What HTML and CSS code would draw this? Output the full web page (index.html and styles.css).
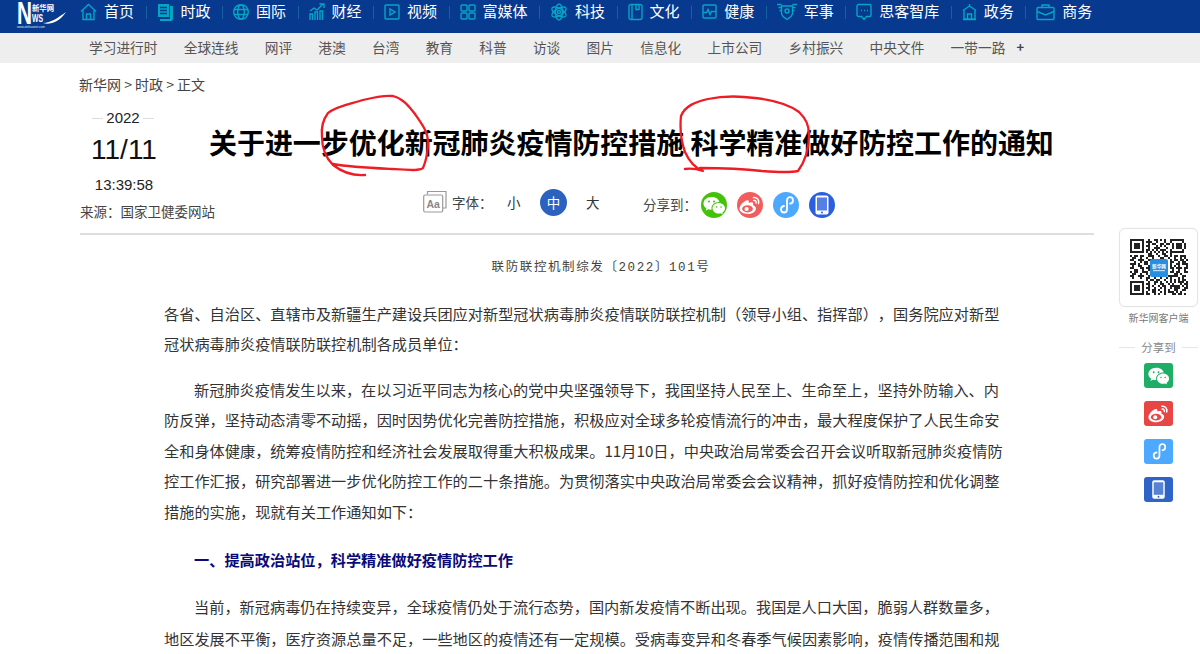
FILE: index.html
```html
<!DOCTYPE html>
<html lang="zh-CN">
<head>
<meta charset="utf-8">
<title>关于进一步优化新冠肺炎疫情防控措施 科学精准做好防控工作的通知</title>
<link rel="stylesheet" href="styles.css">
</head>
<body>
<svg class="sprite" aria-hidden="true">
  <symbol id="wechat" viewBox="0 0 26 26">
    <path fill="#fff" d="M10.500 5C6 5 2.500 7.900 2.500 11.500c0 2 1.100 3.700 2.900 4.900l-.7 2.300 2.600-1.400c.9.300 1.800.4 2.700.4h.7a5 5 0 0 1-.2-1.500c0-3.500 3.300-6.300 7.400-6.300h.5C17.700 7 14.400 5 10.500 5z"/>
    <path fill="#fff" d="M24 16.300c0-3-3-5.300-6.200-5.300-3.500 0-6.300 2.400-6.300 5.300s2.800 5.300 6.300 5.300c.7 0 1.400-.1 2.100-.3l2 1.100-.5-1.800c1.500-1.100 2.600-2.500 2.600-4.300z"/>
    <g fill="currentColor"><circle cx="8" cy="9.600" r="1"/><circle cx="13" cy="9.600" r="1"/><circle cx="15.600" cy="15" r=".8"/><circle cx="20" cy="15" r=".8"/></g>
  </symbol>
  <symbol id="weibo" viewBox="0 0 26 26">
    <path fill="#fff" d="M11 22c-4.500 0-8.500-2-8.500-5.200 0-2.800 3.800-7.400 7.500-8.500 1.600-.4 2.300.7 1.700 2.700 2.300-1 4.500-1 4.500 1 0 .5-.1.900-.3 1.300 1.700.5 3 1.500 3 3.200C18.900 19.500 15.500 22 11 22z"/>
    <ellipse cx="10.500" cy="16.800" rx="5.400" ry="3.600" fill="currentColor"/>
    <circle cx="9.600" cy="17" r="2.100" fill="#fff"/>
    <path fill="none" stroke="#fff" stroke-width="1.500" stroke-linecap="round" d="M16.500 5.500c3.500-.5 6 2.500 5 6M16.800 8.400c1.700-.2 2.700 1 2.300 2.600"/>
  </symbol>
  <symbol id="link" viewBox="0 0 26 26">
    <path fill="none" stroke="#fff" stroke-width="1.800" stroke-linecap="round" d="M11 14c-2 .2-3 1.600-3 3.200 0 2 1.500 3.300 3 3.300 1.800 0 3-1.300 3-3.300V8.500c0-2 1.300-3.300 3-3.300s3 1.300 3 3.300c0 1.700-1 3-3 3.200"/>
  </symbol>
  <symbol id="phone" viewBox="0 0 26 26">
    <rect x="6.500" y="3.500" width="13" height="19" rx="2" fill="#fff"/>
    <rect x="8" y="5.500" width="10" height="13" fill="currentColor" opacity=".8"/>
    <circle cx="13" cy="20.500" r="1" fill="currentColor"/>
  </symbol>
</svg>

<header class="topbar">
  <a class="logo" href="#">
    <svg width="50" height="31" viewBox="0 0 50 31">
      <text x="1" y="24" class="logo-n" textLength="15" lengthAdjust="spacingAndGlyphs">N</text>
      <text x="16" y="11" class="logo-cn" textLength="22" lengthAdjust="spacingAndGlyphs">新华网</text>
      <text x="16" y="22" class="logo-ws" textLength="11" lengthAdjust="spacingAndGlyphs">WS</text>
      <text x="1" y="28" class="logo-url" textLength="28" lengthAdjust="spacingAndGlyphs">www.xinhuanet.com</text>
      <path fill="#fff" d="M27 23C35 23 43 17 50 12C46 18 38 26 27 23z"/>
    </svg>
  </a>
  <nav class="mainnav">
    <a class="nav-item" href="#"><svg class="ico" width="17" height="18" viewBox="0 0 17 18"><path d="M1 8.500 8.500 1.500 16 8.500M3 7.500V16.500H14V7.500M6.500 16.500V11h4v5.500"/></svg>首页</a>
    <i class="nav-sep"></i>
    <a class="nav-item" href="#"><svg class="ico" width="17" height="18" viewBox="0 0 17 18"><path class="solid" d="M1 1h11v13H1zM13 3h3v13a2 2 0 0 1-2 2H3v-2h10z"/><path class="cut" d="M3 4.500h7M3 7.500h7M3 10.500h7"/></svg>时政</a>
    <i class="nav-sep"></i>
    <a class="nav-item" href="#"><svg class="ico" width="16" height="18" viewBox="0 0 16 18"><circle cx="8" cy="9" r="7.300"/><ellipse cx="8" cy="9" rx="3.300" ry="7.300"/><path d="M1 6.500h14M1 11.500h14"/></svg>国际</a>
    <i class="nav-sep"></i>
    <a class="nav-item" href="#"><svg class="ico" width="16" height="18" viewBox="0 0 16 18"><path d="M1 17v-6h2.500v6M6 17V9h2.500v8M11 17V8h2.500v9M1 8l4-3 3 2 6-6M10.500 1H15v4"/></svg>财经</a>
    <i class="nav-sep"></i>
    <a class="nav-item" href="#"><svg class="ico" width="16" height="18" viewBox="0 0 16 18"><rect x="1" y="2" width="14" height="14" rx="1"/><path d="M6 6v6l5-3z"/></svg>视频</a>
    <i class="nav-sep"></i>
    <a class="nav-item" href="#"><svg class="ico" width="16" height="18" viewBox="0 0 16 18"><rect x="1" y="2" width="6" height="6" rx="1"/><rect x="9" y="2" width="6" height="6" rx="1"/><rect x="1" y="10" width="6" height="6" rx="1"/><rect x="9" y="10" width="6" height="6" rx="1"/></svg>富媒体</a>
    <i class="nav-sep"></i>
    <a class="nav-item" href="#"><svg class="ico" width="18" height="18" viewBox="0 0 18 18"><ellipse cx="9" cy="9" rx="8" ry="3.500" transform="rotate(30 9 9)"/><ellipse cx="9" cy="9" rx="8" ry="3.500" transform="rotate(-30 9 9)"/><ellipse cx="9" cy="9" rx="3.500" ry="8"/><circle cx="9" cy="9" r="1.500"/></svg>科技</a>
    <i class="nav-sep"></i>
    <a class="nav-item" href="#"><svg class="ico" width="15" height="18" viewBox="0 0 15 18"><rect x="1" y="1.500" width="13" height="15" rx="2"/><path d="M4 1.500V16.500M8 1.500v5h3v-5"/></svg>文化</a>
    <i class="nav-sep"></i>
    <a class="nav-item" href="#"><svg class="ico" width="15" height="18" viewBox="0 0 15 18"><rect x="1" y="2" width="13" height="13" rx="1"/><path d="M1 9.500h3.500l1.500-3 2 5 1.500-3H14"/></svg>健康</a>
    <i class="nav-sep"></i>
    <a class="nav-item" href="#"><svg class="ico" width="20" height="18" viewBox="0 0 20 18"><path d="M4.500 3h11v7c0 3-3 5-5.500 6.500C7.500 15 4.500 13 4.500 10zM0 1.500h4.500M1.500 4.500h3M2.500 7.500h2M15.500 1.500H20M15.500 4.500h3M15.500 7.500h2"/><circle cx="10" cy="8" r="2"/></svg>军事</a>
    <i class="nav-sep"></i>
    <a class="nav-item" href="#"><svg class="ico" width="16" height="18" viewBox="0 0 16 18"><path d="M2.500 1.500h11a1.500 1.500 0 0 1 1.500 1.500v9a1.500 1.500 0 0 1-1.500 1.500h-3L8 16.500l-2.500-3h-3A1.500 1.500 0 0 1 1 12V3a1.500 1.500 0 0 1 1.500-1.500zM5 7.500h1M8 7.500h1M11 7.500h1"/></svg>思客智库</a>
    <i class="nav-sep"></i>
    <a class="nav-item" href="#"><svg class="ico" width="15" height="18" viewBox="0 0 15 18"><path d="M2 7v9h11V7M1 16.500h13M1 7.500 7.500 3l6.500 4.500M7.500 1v2M5.500 16V11h4v5"/></svg>政务</a>
    <i class="nav-sep"></i>
    <a class="nav-item" href="#"><svg class="ico" width="19" height="18" viewBox="0 0 19 18"><rect x="1" y="4.500" width="17" height="12" rx="1"/><path d="M6 4.500V2h7v2.500M1 8.500l8.500 3.500L18 8.500"/></svg>商务</a>
  </nav>
</header>

<nav class="subnav">
  <a href="#">学习进行时</a><a href="#">全球连线</a><a href="#">网评</a><a href="#">港澳</a><a href="#">台湾</a><a href="#">教育</a><a href="#">科普</a><a href="#">访谈</a><a href="#">图片</a><a href="#">信息化</a><a href="#">上市公司</a><a href="#">乡村振兴</a><a href="#">中央文件</a><a href="#">一带一路</a><a class="more" href="#">+</a>
</nav>

<div class="page">
  <main class="article">
    <div class="crumbs">新华网 &gt; 时政 &gt; 正文</div>
    <div class="head">
      <div class="dateline">
        <div class="year"><span>2022</span></div>
        <div class="day">11/11</div>
        <div class="time">13:39:58</div>
        <div class="source">来源：国家卫健委网站</div>
      </div>
      <div class="headline">
        <h1>关于进一步优化新冠肺炎疫情防控措施 科学精准做好防控工作的通知</h1>
        <div class="tools">
          <svg class="aa" width="24" height="23" viewBox="0 0 24 23"><path d="M4.500 4.500V1.500h18.500v16.500h-3.500"/><rect x=".7" y="5" width="19" height="17" rx="1.500" fill="#fff"/><text x="3.500" y="18">Aa</text></svg>
          <span class="tool-label">字体：</span>
          <span class="size">小</span>
          <span class="size on">中</span>
          <span class="size">大</span>
          <span class="share-label">分享到：</span>
          <span class="round c-wechat"><svg width="26" height="26"><use href="#wechat"/></svg></span>
          <span class="round c-weibo"><svg width="26" height="26"><use href="#weibo"/></svg></span>
          <span class="round c-link"><svg width="26" height="26"><use href="#link"/></svg></span>
          <span class="round c-phone"><svg width="26" height="26"><use href="#phone"/></svg></span>
        </div>
      </div>
    </div>
    <article class="content">
      <p class="docno">联防联控机制综发〔2022〕101号</p>
      <p class="lead">各省、自治区、直辖市及新疆生产建设兵团应对新型冠状病毒肺炎疫情联防联控机制（领导小组、指挥部），国务院应对新型冠状病毒肺炎疫情联防联控机制各成员单位：</p>
      <p>新冠肺炎疫情发生以来，在以习近平同志为核心的党中央坚强领导下，我国坚持人民至上、生命至上，坚持外防输入、内防反弹，坚持动态清零不动摇，因时因势优化完善防控措施，积极应对全球多轮疫情流行的冲击，最大程度保护了人民生命安全和身体健康，统筹疫情防控和经济社会发展取得重大积极成果。11月10日，中央政治局常委会召开会议听取新冠肺炎疫情防控工作汇报，研究部署进一步优化防控工作的二十条措施。为贯彻落实中央政治局常委会会议精神，抓好疫情防控和优化调整措施的实施，现就有关工作通知如下：</p>
      <h2>一、提高政治站位，科学精准做好疫情防控工作</h2>
      <p class="wide">当前，新冠病毒仍在持续变异，全球疫情仍处于流行态势，国内新发疫情不断出现。我国是人口大国，脆弱人群数量多，地区发展不平衡，医疗资源总量不足，一些地区的疫情还有一定规模。受病毒变异和冬春季气候因素影响，疫情传播范围和规</p>
    </article>
  </main>
  <aside class="rail">
    <div class="qr-card">
      <svg class="qr" width="58" height="58" viewBox="0 0 29 29">
        <path stroke="#222" stroke-width="1" fill="none" d="M0 .5h7m2 0h1m2 0h2m1 0h1m1 0h1m2 0h7M0 1.500h1m5 0h1m1 0h3m2 0h1m3 0h1m2 0h1m5 0h1M0 2.500h1m1 0h3m1 0h1m2 0h1m1 0h2m2 0h2m1 0h2m1 0h1m1 0h3m1 0h1M0 3.500h1m1 0h3m1 0h1m1 0h2m3 0h1m1 0h1m1 0h1m3 0h1m1 0h3m1 0h1M0 4.500h1m1 0h3m1 0h1m2 0h1m2 0h3m3 0h1m2 0h1m1 0h3m1 0h1M0 5.500h1m5 0h1m1 0h2m1 0h1m1 0h1m1 0h3m2 0h1m5 0h1M0 6.500h7m1 0h1m1 0h1m1 0h1m1 0h1m1 0h1m1 0h1m1 0h7M9 7.500h2m2 0h1m2 0h2m2 0h1M0 8.500h1m1 0h2m1 0h2m2 0h3m2 0h1m2 0h2m1 0h1m1 0h2m1 0h3M1 9.500h2m2 0h1m2 0h1m2 0h1m3 0h2m2 0h1m2 0h1m2 0h1m1 0h1M0 10.500h2m2 0h3m2 0h2m9 0h1m1 0h2m1 0h2m1 0h1M2 11.500h1m2 0h1m1 0h2m2 0h1m8 0h2m2 0h1m1 0h2M0 12.500h3m1 0h1m2 0h2m2 0h1m8 0h1m2 0h2m1 0h3M1 13.500h1m2 0h2m3 0h1m1 0h1m8 0h1m1 0h1m1 0h1m3 0h1M0 14.500h2m3 0h2m1 0h2m1 0h1m8 0h2m1 0h3m1 0h2M2 15.500h2m2 0h1m2 0h2m1 0h1m8 0h1m2 0h1m2 0h1m1 0h1M0 16.500h1m1 0h2m2 0h3m2 0h1m8 0h2m1 0h2m2 0h2M1 17.500h2m2 0h1m2 0h1m1 0h2m1 0h1m1 0h1m1 0h2m3 0h2m1 0h1M0 18.500h2m2 0h3m2 0h1m2 0h3m1 0h2m1 0h5m2 0h2M1 19.500h1m3 0h1m2 0h2m2 0h1m2 0h1m2 0h1m1 0h1m3 0h1m1 0h1M8 20.500h1m1 0h2m1 0h2m2 0h1m2 0h1m1 0h1m1 0h1m1 0h2m1 0h1M0 21.500h7m2 0h1m2 0h2m1 0h1m2 0h1m1 0h1m1 0h1m1 0h3m1 0h1M0 22.500h1m5 0h1m1 0h2m2 0h1m2 0h2m2 0h1m1 0h1m3 0h1m1 0h2M0 23.500h1m1 0h3m1 0h1m2 0h1m1 0h1m2 0h1m1 0h2m2 0h5m1 0h1m1 0h1M0 24.500h1m1 0h3m1 0h1m1 0h2m2 0h1m2 0h1m1 0h1m2 0h1m1 0h3m2 0h2M0 25.500h1m1 0h3m1 0h1m2 0h1m1 0h2m1 0h1m2 0h1m1 0h1m2 0h2m2 0h2M0 26.500h1m5 0h1m1 0h1m2 0h2m2 0h1m1 0h1m1 0h3m1 0h1m1 0h1M0 27.500h7m1 0h2m2 0h1m1 0h1m2 0h1m3 0h2m1 0h2m1 0h1"/>
        <rect x="10" y="10" width="9" height="9" rx="1" fill="#2a8ee0"/>
        <text x="14.500" y="14.500" class="qr-mark">新华网</text>
        <rect x="11.500" y="15.500" width="6" height=".6" fill="#bcdcf6"/>
      </svg>
    </div>
    <div class="qr-label">新华网客户端</div>
    <div class="rail-share">分享到</div>
    <ul class="rail-icons">
      <li class="sq s-wechat"><svg width="25" height="25"><use href="#wechat"/></svg></li>
      <li class="sq s-weibo"><svg width="25" height="25"><use href="#weibo"/></svg></li>
      <li class="sq s-link"><svg width="25" height="25"><use href="#link"/></svg></li>
      <li class="sq s-phone"><svg width="25" height="25"><use href="#phone"/></svg></li>
    </ul>
  </aside>
</div>

<svg class="scribble" width="1200" height="654" viewBox="0 0 1200 654" aria-hidden="true">
  <path d="M365 175C352 176 342 172 333 165C325 157 322 148 322 137C321 128 322 121 328 113C336 106 350 104 363 100C375 97 385 95 393 96C402 98 408 105 415 114C422 124 428 132 428 142C428 151 426 161 423 168C420 171 408 170 392 169C372 168 350 167 333 164"/>
  <path d="M685 169C692 168 700 170 703 171C695 168 689 161 685 152C681 141 680 126 681 116C685 106 695 102 708 99C722 96 740 96 755 98C772 100 788 104 799 112C806 119 809 125 809 135C809 146 806 160 798 171C788 173 775 172 762 171C745 169 722 168 700 168"/>
</svg>
</body>
</html>
```
FILE: styles.css
```css
* { box-sizing: border-box; }
html, body { margin: 0; padding: 0; height: 654px; overflow: hidden; background: #fff; }
body { position: relative; font-family: "Liberation Sans", "Noto Sans CJK SC", sans-serif; color: #333; text-spacing-trim: space-all; }
a { color: inherit; text-decoration: none; }
.sprite { display: none; }

.topbar { display: flex; height: 33px; padding: 0 0 0 16px; background: #073a8f; color: #fff; }
.logo { display: block; width: 64px; height: 31px; flex: none; }
.logo svg { overflow: visible; }
.logo-n { font: bold 32px "Liberation Sans", sans-serif; fill: #fff; }
.logo-cn { font: bold 7.500px "Noto Sans CJK SC", sans-serif; fill: #fff; }
.logo-ws { font: bold 10px "Liberation Sans", sans-serif; fill: #fff; }
.logo-url { font: 3px "Liberation Sans", sans-serif; fill: #dfe8f5; }
.mainnav { display: flex; align-items: center; height: 22px; font-size: 15px; font-family: "Noto Sans CJK SC", sans-serif; }
.nav-item { display: flex; align-items: center; gap: 7px; white-space: nowrap; line-height: 22px; }
.nav-sep { width: 1px; height: 13px; margin: 2px 10px 0 11.500px; background: #18609f; }
.ico { flex: none; margin-top: 2px; fill: none; stroke: #06a5c4; stroke-width: 1.400; }
.ico .solid { fill: #06a5c4; stroke: none; }
.ico .cut { stroke: #073a8f; }

.subnav { display: flex; align-items: center; gap: 26.250px; height: 30px; padding: 0 0 2px 89px; background: #eee; color: #555; font: 13.700px/28px "Noto Sans CJK SC", sans-serif; }
.subnav .more { color: #444; font-weight: bold; margin-left: -15px; font-size: 13px; }

.page { display: flex; padding-left: 80px; }
.article { width: 1014px; flex: none; }
.crumbs { margin-left: -1px; padding-top: 11px; font: 14px/20px "Noto Sans CJK SC", sans-serif; color: #444; }
.head { display: flex; height: 141px; border-bottom: 2px solid #ddd; }
.dateline { width: 129px; flex: none; font-size: 15px; color: #222; }
.year { display: flex; align-items: center; justify-content: center; width: 62px; margin: 14px 0 0 12px; line-height: 20px; }
.year span { padding: 0 3px; }
.year::before, .year::after { content: ""; flex: 1; height: 1px; background: #ddd; }
.day { width: 88px; text-align: center; font-size: 28px; line-height: 34px; margin-top: 5px; color: #111; }
.time { width: 88px; text-align: center; margin-top: 8px; line-height: 20px; }
.source { margin-top: 6px; font: 13.500px/20px "Noto Sans CJK SC", sans-serif; color: #444; white-space: nowrap; }
.headline { flex: 1; min-width: 0; }
h1 { margin: 28px 0 0; font: bold 28px/40px "Noto Sans CJK SC", sans-serif; color: #000; white-space: nowrap; letter-spacing: -.05px; }
.tools { display: flex; align-items: center; height: 30px; margin-top: 25px; padding-left: 214px; font: 13.500px/20px "Noto Sans CJK SC", sans-serif; color: #444; }
.aa { flex: none; margin-top: -2px; fill: none; stroke: #999; stroke-width: 1.200; }
.aa text { font: bold 10.500px "Liberation Sans", sans-serif; fill: #888; stroke: none; }
.tool-label { margin-left: 5px; width: 55px; }
.size { width: 27px; height: 27px; border-radius: 50%; text-align: center; line-height: 27px; margin-right: 19px; color: #333; flex: none; }
.size.on { background: #2b62c0; color: #fff; }
.tool-label + .size { width: 13px; margin-right: 20px; }
.size.on + .size { width: 13px; margin-right: 44px; }
.share-label { width: 58px; flex: none; margin-top: 3px; }
.round { display: flex; width: 26px; height: 26px; margin: 6px 10px 0 0; border-radius: 50%; flex: none; }
.c-wechat { background: #43c20a; color: #43c20a; }
.c-weibo { background: #f25c5c; color: #f25c5c; }
.c-link { background: #4da8ff; color: #4da8ff; }
.c-phone { background: #2a5fe0; color: #2a5fe0; }

.content { width: 840px; margin-left: 84px; font: 15.200px/30.500px "Noto Sans CJK SC", sans-serif; color: #333; }
.content p { margin: 0 0 15px; text-indent: 30px; }
.content .lead { text-indent: 0; }
.content .docno { margin: 18px 0 14px; padding-left: 34px; text-indent: 0; text-align: center; font: 12.500px/30.500px "Liberation Mono", "Noto Sans CJK SC", monospace; letter-spacing: 1.600px; color: #444; }
.content .wide { line-height: 32px; }
.content h2 { margin: 17px 0 14px; padding-left: 30px; font: bold 15.200px/33px "Noto Sans CJK SC", sans-serif; color: #0a0a78; }

.rail { width: 79px; margin: 165px 0 0 25px; flex: none; }
.qr-card { display: flex; align-items: center; justify-content: center; width: 79px; height: 79px; background: #fff; border: 1px solid #e4e4e4; border-radius: 6px; box-shadow: 0 0 2px rgba(0,0,0,.06); }
.qr-mark { font: bold 2.300px "Noto Sans CJK SC", sans-serif; fill: #fff; text-anchor: middle; }
.qr-label { margin-top: 4px; text-align: center; font: 10px/14px "Noto Sans CJK SC", sans-serif; color: #777; }
.rail-share { display: flex; align-items: center; gap: 6px; margin-top: 14px; font: 11.500px/16px "Noto Sans CJK SC", sans-serif; color: #888; }
.rail-share::before, .rail-share::after { content: ""; flex: 1; height: 1px; background: #e6e6e6; }
.rail-icons { display: flex; flex-direction: column; align-items: center; gap: 13px; margin: 8px 0 0; padding: 0; list-style: none; }
.sq { display: flex; justify-content: center; width: 29px; height: 25px; border-radius: 3px; }
.s-wechat { background: #1fae66; color: #1fae66; }
.s-weibo { background: #e84545; color: #e84545; }
.s-link { background: #4da8ff; color: #4da8ff; }
.s-phone { background: #2e63c8; color: #2e63c8; }

.scribble { position: absolute; left: 0; top: 0; pointer-events: none; fill: none; stroke: #ee1c25; stroke-width: 2.300; stroke-linecap: round; stroke-linejoin: round; }
```
